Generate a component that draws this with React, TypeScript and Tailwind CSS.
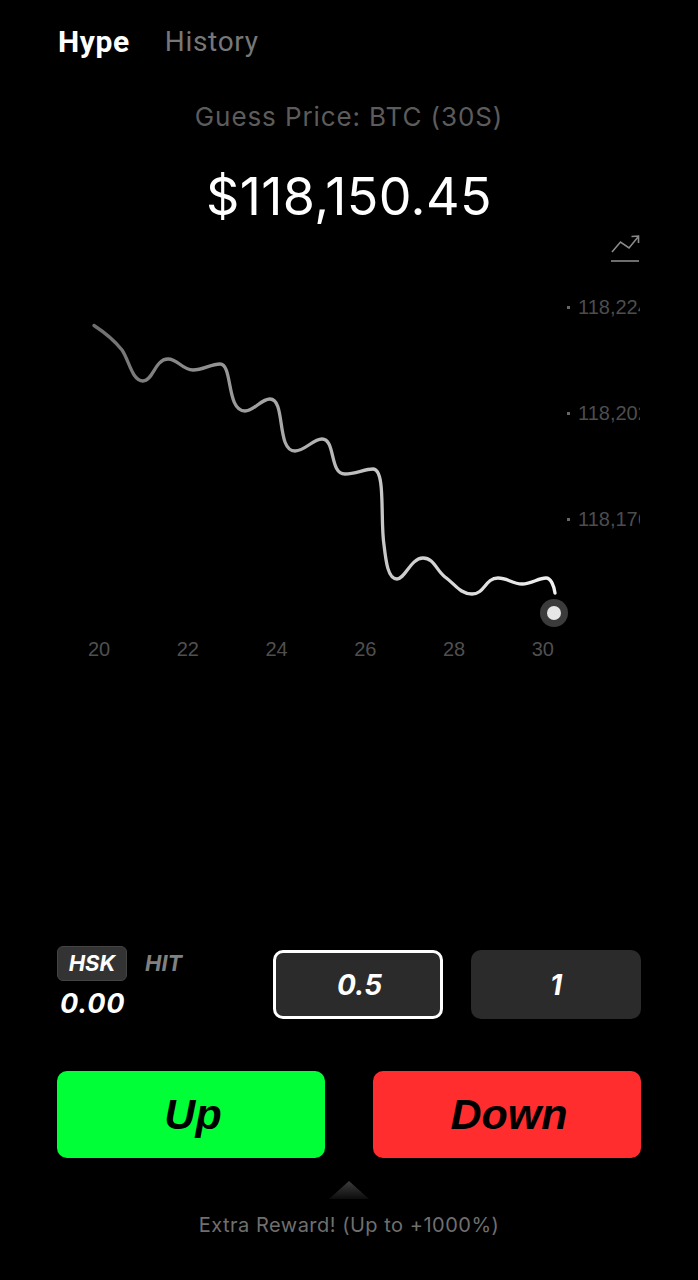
export default function App() {
  const sans = "[font-family:Inter,'Liberation_Sans',sans-serif]";
  const line =
    "M94 325.5 C104 332 114 340 122 350 C129 360 132 381 143 381 C153 381 155 359 168 359 C178 359 182 370 193 370 C203 370 211 364 220 364 C233 364 226 411 245 411 C254 411 261 399 270 399 C286 399 276 451 295 451 C305 451 313 439 322 439 C336 439 329 474 345 474 C355 474 365 469 373 469 C386 469 380 520 384 545 C386 562 388 579 397 579 C405 579 411 558 423 558 C434 558 436 570 445 577 C455 584 460 594 472 594 C485 594 485 578 498 578 C508 578 512 584 522 584 C532 584 538 578 546 578 C551 578 554 586 555 593";
  return (
    <div className={`w-[698px] h-[1280px] bg-black flex flex-col overflow-hidden ${sans}`}>
      <div className="flex items-center gap-[35px] pl-[58px] pt-[25px] h-[58px]">
        <span className="text-[30px] leading-[34px] font-bold text-white font-['Roboto'] tracking-[0.6px]">Hype</span>
        <span className="text-[28px] leading-[34px] text-[#777777] font-['Roboto'] tracking-[0.7px]">History</span>
      </div>
      <div className="mt-[42px] text-center text-[26px] leading-[34px] text-[#5c5c5c] tracking-[0.9px]">
        Guess Price: BTC (30S)
      </div>
      <div className="mt-[31px] text-center text-[52px] leading-[64px] text-white tracking-[0.4px]">$118,150.45</div>
      <div className="flex justify-end pr-[57px] mt-[5px] h-[30px]">
        <svg width="31" height="30" viewBox="0 0 31 30" fill="none" stroke="#8a8a8a" strokeWidth="1.6">
          <path d="M2 18 L10.500 8 L19 14 L28 3" />
          <path d="M21.500 2.500 L28.500 2 L28.500 9" />
          <path d="M1 27 H29" />
        </svg>
      </div>
      <div className="relative h-[360px] mt-[36px]">
        <svg className="absolute left-0 top-0" width="698" height="340" viewBox="0 300 698 340" fill="none">
          <defs>
            <linearGradient id="lineGrad" gradientUnits="userSpaceOnUse" x1="94" y1="0" x2="555" y2="0">
              <stop offset="0" stopColor="#6e6e6e" />
              <stop offset="0.6" stopColor="#c4c4c4" />
              <stop offset="1" stopColor="#f2f2f2" />
            </linearGradient>
          </defs>
          <path d={line} stroke="url(#lineGrad)" strokeWidth="3.3" strokeLinecap="round" />
          <circle cx="554" cy="613" r="14" fill="#3b3b3b" />
          <circle cx="554" cy="613" r="7" fill="#e6e6e6" />
        </svg>
        <div className="absolute left-[567px] top-[-5px] w-[73px] overflow-hidden flex flex-col gap-[82px] text-[20px] leading-[24px] text-[#4d4d4d] whitespace-nowrap font-['Liberation_Sans']">
          <div className="flex items-center gap-[8px]"><span className="w-[3px] h-[3px] bg-[#666666] shrink-0" />118,224</div>
          <div className="flex items-center gap-[8px]"><span className="w-[3px] h-[3px] bg-[#666666] shrink-0" />118,202</div>
          <div className="flex items-center gap-[8px]"><span className="w-[3px] h-[3px] bg-[#666666] shrink-0" />118,176</div>
        </div>
        <div className="absolute left-[88px] top-[337px] w-[466px] flex justify-between text-[20px] leading-[24px] text-[#4f4f4f] font-['Liberation_Sans']">
          <span>20</span><span>22</span><span>24</span><span>26</span><span>28</span><span>30</span>
        </div>
      </div>
      <div className="flex items-start pl-[57px] pr-[57px] mt-[290px]">
        <div className="w-[216px] -mt-[4px]">
          <div className="flex items-center gap-[18px]">
            <span className="w-[70px] h-[35px] rounded-[6px] bg-[#333333] border border-[#444444] flex items-center justify-center text-[22px] font-bold italic text-white">HSK</span>
            <span className="text-[22px] font-bold italic text-[#808080]">HIT</span>
          </div>
          <div className="pl-[3px] mt-[4px] text-[27px] leading-[38px] font-bold italic text-white tracking-[0.8px]">0.00</div>
        </div>
        <div className="w-[170px] h-[69px] pl-[3px] rounded-[10px] border-[3px] border-white bg-[#2b2b2b] flex items-center justify-center text-[28px] font-bold italic text-white">0.5</div>
        <div className="w-[170px] h-[69px] ml-[28px] rounded-[10px] bg-[#2b2b2b] flex items-center justify-center text-[28px] font-bold italic text-white">1</div>
      </div>
      <div className="flex justify-between px-[57px] mt-[48px]">
        <div className="w-[268px] h-[87px] pl-[4px] rounded-[10px] bg-[#00ff37] flex items-center justify-center text-[43px] font-bold italic text-black font-['Liberation_Sans']">Up</div>
        <div className="w-[268px] h-[87px] pl-[4px] rounded-[10px] bg-[#ff2d2d] flex items-center justify-center text-[43px] font-bold italic text-black font-['Liberation_Sans']">Down</div>
      </div>
      <div className="flex justify-center mt-[23px]">
        <svg width="40" height="18" viewBox="0 0 40 18">
          <defs>
            <linearGradient id="tri" x1="0" y1="0" x2="0" y2="1">
              <stop offset="0" stopColor="#3d3d3d" />
              <stop offset="1" stopColor="#0c0c0c" />
            </linearGradient>
          </defs>
          <path d="M20 0 L40 18 H0 Z" fill="url(#tri)" />
        </svg>
      </div>
      <div className="mt-[12px] text-center text-[20px] leading-[28px] text-[#6f6f6f] tracking-[0.5px]">
        Extra Reward! (Up to +1000%)
      </div>
    </div>
  );
}
